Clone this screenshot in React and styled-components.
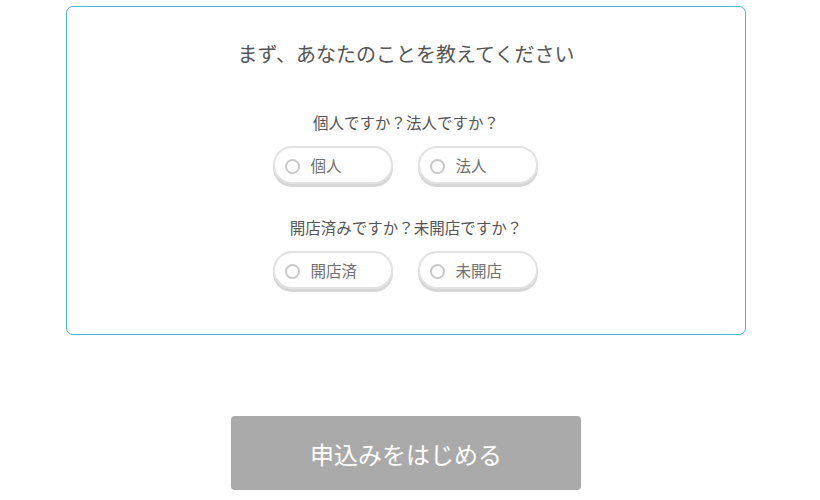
import React from "react";
import styled, { createGlobalStyle } from "styled-components";

const questions = [
  { label: "個人ですか？法人ですか？", options: ["個人", "法人"] },
  { label: "開店済みですか？未開店ですか？", options: ["開店済", "未開店"] },
];

const App = () => {
  return (
    <Page>
      <GlobalStyle />
      <Card>
        <Title>まず、あなたのことを教えてください</Title>
        {questions.map((q) => (
          <Question key={q.label}>
            <QuestionLabel>{q.label}</QuestionLabel>
            <Options>
              {q.options.map((opt) => (
                <Pill key={opt}>
                  <Radio />
                  <PillText>{opt}</PillText>
                </Pill>
              ))}
            </Options>
          </Question>
        ))}
      </Card>
      <StartButton>申込みをはじめる</StartButton>
    </Page>
  );
};

const GlobalStyle = createGlobalStyle`
  body {
    margin: 0;
    background: #fff;
    font-family: "Noto Sans CJK JP", "Noto Sans", sans-serif;
  }
`;

const Page = styled.div`
  width: 812px;
  padding-top: 6px;
  display: flex;
  flex-direction: column;
  align-items: center;
`;

const Card = styled.section`
  box-sizing: border-box;
  width: 680px;
  height: 329px;
  border: 1px solid #4cb1d2;
  border-radius: 7px;
  padding-top: 33px;
  display: flex;
  flex-direction: column;
  align-items: center;
`;

const Title = styled.h1`
  margin: 0 0 43px;
  font-size: 20px;
  font-weight: 400;
  line-height: 28px;
  color: #555;
`;

const Question = styled.div`
  display: flex;
  flex-direction: column;
  align-items: center;
  margin-bottom: 32px;
`;

const QuestionLabel = styled.p`
  margin: 0 0 13px;
  font-size: 15.5px;
  line-height: 22px;
  color: #555;
`;

const Options = styled.div`
  display: flex;
  gap: 25px;
  margin-left: -2px;
`;

const Pill = styled.label`
  box-sizing: border-box;
  width: 120px;
  height: 38px;
  border: 2px solid #e2e2e2;
  border-radius: 20px;
  box-shadow: 0 3px 0 #d6d6d6;
  display: flex;
  align-items: center;
  padding-left: 10px;
  gap: 11px;
  cursor: pointer;
  background: #fff;
`;

const Radio = styled.span`
  box-sizing: border-box;
  width: 15px;
  height: 15px;
  margin-top: 2px;
  border: 2px solid #c8c8c8;
  border-radius: 50%;
`;

const PillText = styled.span`
  font-size: 15.5px;
  color: #707070;
`;

const StartButton = styled.button`
  margin-top: 81px;
  width: 350px;
  height: 74px;
  border: none;
  border-radius: 4px;
  background: #aaaaaa;
  color: #fff;
  font-family: inherit;
  font-size: 24px;
  cursor: pointer;
`;

export default App;
